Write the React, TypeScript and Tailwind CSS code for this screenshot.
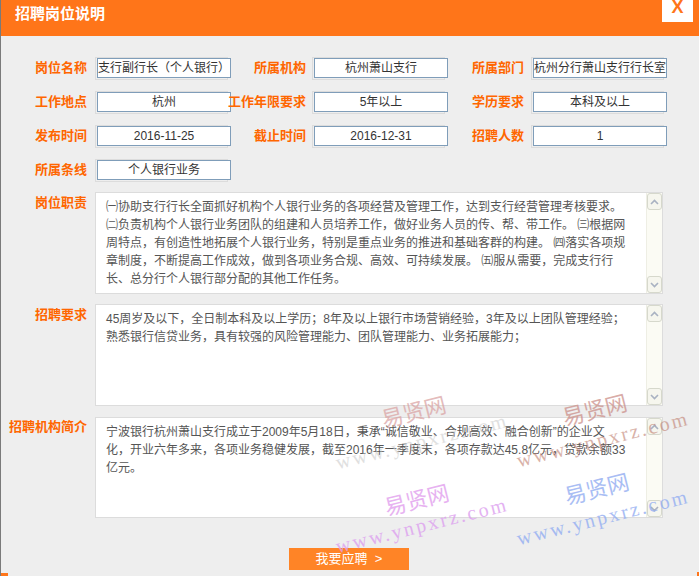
import React from "react";

const labelCls =
  "text-[13px] font-bold text-[#ff6600] whitespace-nowrap leading-[18px] text-right";

function Field({ value, left }: { value: string; left?: boolean }) {
  return (
    <div className="w-[133px] h-[23px] border border-[#dcdcdc] shrink-0">
      <div
        className={
          left
            ? "w-[134px] h-[20px] ml-[1px] border border-[#7f9db9] bg-white text-[12px] leading-[18px] text-[#333] whitespace-nowrap overflow-hidden text-left"
            : "w-[134px] h-[20px] ml-[1px] border border-[#7f9db9] bg-white text-[12px] leading-[18px] text-[#333] whitespace-nowrap overflow-hidden text-center"
        }
      >
        {value}
      </div>
    </div>
  );
}

function Chevron({ up }: { up?: boolean }) {
  return (
    <svg width="9" height="6" viewBox="0 0 9 6">
      <path
        d={up ? "M1 5 L4.5 1.5 L8 5" : "M1 1 L4.5 4.5 L8 1"}
        fill="none"
        stroke="#a9b2c2"
        strokeWidth="1.6"
      />
    </svg>
  );
}

function Scrollbar() {
  return (
    <div className="w-[16px] flex flex-col bg-[#fbfbf4] border-l border-[#eeeee4] shrink-0">
      <div className="h-[17px] rounded-[3px] border border-[#d6d8cc] bg-[#f6f6ee] flex items-center justify-center">
        <Chevron up />
      </div>
      <div className="flex-1" />
      <div className="h-[17px] rounded-[3px] border border-[#d6d8cc] bg-[#f6f6ee] flex items-center justify-center">
        <Chevron />
      </div>
    </div>
  );
}

function TextBox({ lines, h }: { lines: string[]; h: string }) {
  return (
    <div
      className={
        h === "102"
          ? "ml-[8px] w-[568px] h-[102px] border border-[#dcdcdc] bg-white flex"
          : "ml-[8px] w-[568px] h-[101px] border border-[#dcdcdc] bg-white flex"
      }
    >
      <div className="flex-1 pl-[10px] pt-[5px] text-[12px] leading-[18px] text-[#555] overflow-hidden">
        {lines.map((l, i) => (
          <div key={i} className="whitespace-pre">
            {l}
          </div>
        ))}
      </div>
      <Scrollbar />
    </div>
  );
}

export default function App() {
  return (
    <div className="relative w-[699px] h-[576px] overflow-hidden bg-[#eeeeee] border-l border-[#7a7a7a] font-['Liberation_Sans','Noto_Sans_CJK_SC',sans-serif]">
      {/* header */}
      <div className="h-[36px] bg-[#ff7519] flex items-start">
        <div className="pl-[14px] text-[15px] font-bold text-white leading-[28px]">
          招聘岗位说明
        </div>
        <div className="ml-auto mr-[6px] w-[31px] h-[22px] bg-white text-center text-[18px] font-bold leading-[14px] text-[#ff7519]">
          X
        </div>
      </div>

      {/* fields */}
      <div className="mt-[21px] flex flex-col gap-[11px]">
        <div className="flex items-center h-[23px]">
          <div className={"w-[86px] mb-[2px] " + labelCls}>岗位名称</div>
          <div className="ml-[8px]">
            <Field value="支行副行长（个人银行）" left />
          </div>
          <div className={"w-[78px] mb-[2px] " + labelCls}>所属机构</div>
          <div className="ml-[6px]">
            <Field value="杭州萧山支行" />
          </div>
          <div className={"w-[79px] mb-[2px] " + labelCls}>所属部门</div>
          <div className="ml-[7px]">
            <Field value="杭州分行萧山支行行长室" left />
          </div>
        </div>
        <div className="flex items-center h-[23px]">
          <div className={"w-[86px] mb-[2px] " + labelCls}>工作地点</div>
          <div className="ml-[8px]">
            <Field value="杭州" />
          </div>
          <div className={"w-[78px] mb-[2px] " + labelCls}>工作年限要求</div>
          <div className="ml-[6px]">
            <Field value="5年以上" />
          </div>
          <div className={"w-[79px] mb-[2px] " + labelCls}>学历要求</div>
          <div className="ml-[7px]">
            <Field value="本科及以上" />
          </div>
        </div>
        <div className="flex items-center h-[23px]">
          <div className={"w-[86px] mb-[2px] " + labelCls}>发布时间</div>
          <div className="ml-[8px]">
            <Field value="2016-11-25" />
          </div>
          <div className={"w-[78px] mb-[2px] " + labelCls}>截止时间</div>
          <div className="ml-[6px]">
            <Field value="2016-12-31" />
          </div>
          <div className={"w-[79px] mb-[2px] " + labelCls}>招聘人数</div>
          <div className="ml-[7px]">
            <Field value="1" />
          </div>
        </div>
        <div className="flex items-center h-[23px]">
          <div className={"w-[86px] mb-[2px] " + labelCls}>所属条线</div>
          <div className="ml-[8px]">
            <Field value="个人银行业务" />
          </div>
        </div>
      </div>

      {/* text areas */}
      <div className="flex mt-[10px]">
        <div className={"w-[86px] mt-[2px] " + labelCls}>岗位职责</div>
        <TextBox
          h="102"
          lines={[
            "㈠协助支行行长全面抓好机构个人银行业务的各项经营及管理工作，达到支行经营管理考核要求。",
            "㈡负责机构个人银行业务团队的组建和人员培养工作，做好业务人员的传、帮、带工作。 ㈢根据网",
            "周特点，有创造性地拓展个人银行业务，特别是重点业务的推进和基础客群的构建。 ㈣落实各项规",
            "章制度，不断提高工作成效，做到各项业务合规、高效、可持续发展。 ㈤服从需要，完成支行行",
            "长、总分行个人银行部分配的其他工作任务。",
          ]}
        />
      </div>
      <div className="flex mt-[10px]">
        <div className={"w-[86px] mt-[2px] " + labelCls}>招聘要求</div>
        <TextBox
          h="102"
          lines={[
            "45周岁及以下，全日制本科及以上学历；8年及以上银行市场营销经验，3年及以上团队管理经验；",
            "熟悉银行信贷业务，具有较强的风险管理能力、团队管理能力、业务拓展能力；",
          ]}
        />
      </div>
      <div className="flex mt-[11px]">
        <div className={"w-[86px] mt-[1px] " + labelCls}>招聘机构简介</div>
        <TextBox
          h="101"
          lines={[
            "宁波银行杭州萧山支行成立于2009年5月18日，秉承“诚信敬业、合规高效、融合创新”的企业文",
            "化，开业六年多来，各项业务稳健发展，截至2016年一季度末，各项存款达45.8亿元，贷款余额33",
            "亿元。",
          ]}
        />
      </div>

      {/* button */}
      <div className="mt-[30px] ml-[288px] w-[120px] h-[22px] bg-[#ff8426] text-white text-[13px] leading-[22px] text-center">
        我要应聘&nbsp;&nbsp;&gt;
      </div>

      {/* bottom orange bits */}
      <div className="absolute left-0 bottom-0 w-[7px] h-[3px] bg-[#ff7519]" />
      <div className="absolute right-0 bottom-0 w-[2px] h-[4px] bg-[#ff7519]" />

      {/* watermarks */}
      <div className="pointer-events-none absolute left-[380px] top-[402px] w-[66px] text-[22px] leading-[22px] -rotate-[14deg] text-[#d9a0a0] opacity-70">
        易贤网
      </div>
      <div className="pointer-events-none absolute left-[331px] top-[430px] w-[180px] text-center font-['Liberation_Serif',serif] tracking-[2.5px] text-[20px] leading-[22px] -rotate-[14deg] text-[#cccccc] opacity-60">
        www.ynpxrz.com
      </div>
      <div className="pointer-events-none absolute left-[561px] top-[400px] w-[66px] text-[22px] leading-[22px] -rotate-[14deg] text-[#c98a84] opacity-70">
        易贤网
      </div>
      <div className="pointer-events-none absolute left-[512px] top-[428px] w-[180px] text-center font-['Liberation_Serif',serif] tracking-[2.5px] text-[20px] leading-[22px] -rotate-[14deg] text-[#c08070] opacity-60">
        www.ynpxrz.com
      </div>
      <div className="pointer-events-none absolute left-[383px] top-[490px] w-[66px] text-[22px] leading-[22px] -rotate-[14deg] text-[#e2a0ee] opacity-80">
        易贤网
      </div>
      <div className="pointer-events-none absolute left-[331px] top-[514px] w-[180px] text-center font-['Liberation_Serif',serif] tracking-[2.5px] text-[20px] leading-[22px] -rotate-[14deg] text-[#dda0ef] opacity-80">
        www.ynpxrz.com
      </div>
      <div className="pointer-events-none absolute left-[563px] top-[479px] w-[66px] text-[22px] leading-[22px] -rotate-[14deg] text-[#94aef2] opacity-80">
        易贤网
      </div>
      <div className="pointer-events-none absolute left-[512px] top-[506px] w-[180px] text-center font-['Liberation_Serif',serif] tracking-[2.5px] text-[20px] leading-[22px] -rotate-[14deg] text-[#94aef2] opacity-80">
        www.ynpxrz.com
      </div>
    </div>
  );
}
